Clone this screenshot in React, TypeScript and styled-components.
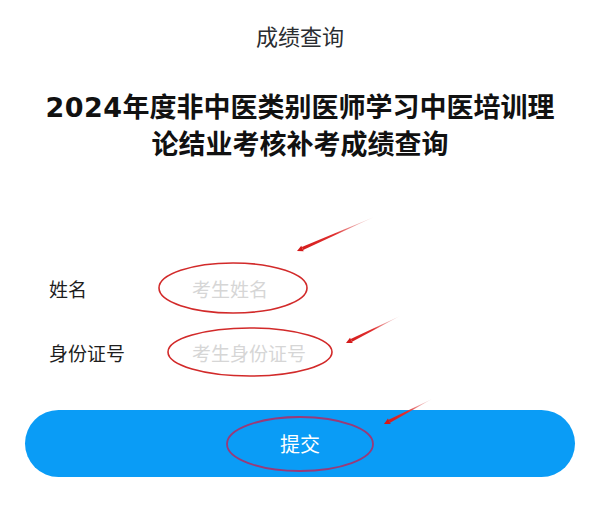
import styled, { createGlobalStyle } from "styled-components";

const GlobalStyle = createGlobalStyle`
  html, body {
    margin: 0;
    padding: 0;
    background: #ffffff;
  }
  body {
    font-family: "Noto Sans CJK SC", "Noto Sans", sans-serif;
  }
`;

const Page = styled.div`
  position: relative;
  width: 600px;
  height: 527px;
  overflow: hidden;
  background: #ffffff;
`;

const NavTitle = styled.div`
  height: 70px;
  line-height: 70px;
  text-align: center;
  font-size: 22px;
  color: #2a2d31;
`;

const Heading = styled.h1`
  margin: 17px 0 0;
  text-align: center;
  font-size: 27px;
  line-height: 37px;
  font-weight: 700;
  color: #111111;
`;

const Year = styled.span`
  font-family: "DejaVu Sans", "Noto Sans", sans-serif;
  letter-spacing: 0.5px;
  line-height: 1;
`;

const Form = styled.form`
  display: flex;
  flex-direction: column;
  margin-top: 95px;
`;

const Row = styled.div`
  display: flex;
  align-items: center;
  height: 64px;
  padding-left: 49px;
`;

const Label = styled.label`
  width: 143px;
  flex-shrink: 0;
  font-size: 19px;
  color: #1e1e1e;
`;

const Input = styled.input`
  border: none;
  outline: none;
  padding: 0;
  background: transparent;
  font-family: inherit;
  font-size: 19px;
  color: #333333;
  width: 260px;

  &::placeholder {
    color: #d6d6d6;
  }
`;

const SubmitButton = styled.button`
  display: flex;
  align-items: center;
  justify-content: center;
  margin: 26px 25px 0;
  height: 67px;
  border: none;
  border-radius: 34px;
  background: #0a9cf6;
  color: #ffffff;
  font-family: inherit;
  font-size: 20px;
`;

const Marks = styled.svg`
  position: absolute;
  left: 0;
  top: 0;
  pointer-events: none;
`;

type ArrowProps = { x1: number; y1: number; x2: number; y2: number; id: string };

function Arrow({ x1, y1, x2, y2, id }: ArrowProps) {
  const dx = x2 - x1;
  const dy = y2 - y1;
  const len = Math.hypot(dx, dy);
  const ux = dx / len;
  const uy = dy / len;
  const nx = -uy;
  const ny = ux;
  const w = 1.6;
  const hx = x2 - ux * 6;
  const hy = y2 - uy * 6;
  const body = [
    `${x1},${y1}`,
    `${hx + nx * w},${hy + ny * w}`,
    `${hx - nx * w},${hy - ny * w}`,
  ].join(" ");
  const head = [
    `${x2},${y2}`,
    `${hx + nx * 3},${hy + ny * 3}`,
    `${hx - nx * 3},${hy - ny * 3}`,
  ].join(" ");
  return (
    <g>
      <defs>
        <linearGradient id={id} gradientUnits="userSpaceOnUse" x1={x1} y1={y1} x2={x2} y2={y2}>
          <stop offset="0" stopColor="#e8c0c0" stopOpacity="0.4" />
          <stop offset="0.5" stopColor="#e03030" />
          <stop offset="1" stopColor="#d41a1a" />
        </linearGradient>
      </defs>
      <polygon points={body} fill={`url(#${id})`} />
      <polygon points={head} fill="#d41a1a" />
    </g>
  );
}

export default function App() {
  return (
    <>
      <GlobalStyle />
      <Page>
        <NavTitle>成绩查询</NavTitle>
        <Heading>
          <Year>2024</Year>年度非中医类别医师学习中医培训理
          <br />
          论结业考核补考成绩查询
        </Heading>
        <Form onSubmit={e => e.preventDefault()}>
          <Row>
            <Label>姓名</Label>
            <Input placeholder="考生姓名" />
          </Row>
          <Row>
            <Label>身份证号</Label>
            <Input placeholder="考生身份证号" />
          </Row>
          <SubmitButton type="submit">提交</SubmitButton>
        </Form>
        <Marks width="600" height="527" viewBox="0 0 600 527">
          <ellipse cx="233" cy="288" rx="74" ry="25" fill="none" stroke="#d22a2a" strokeWidth="1.6" />
          <ellipse cx="250" cy="352" rx="82" ry="24" fill="none" stroke="#d22a2a" strokeWidth="1.6" />
          <ellipse cx="300" cy="444" rx="73" ry="27" fill="none" stroke="#9a3a78" strokeWidth="1.8" />
          <Arrow id="a1" x1={374} y1={217} x2={297} y2={251} />
          <Arrow id="a2" x1={400} y1={316} x2={346} y2={343} />
          <Arrow id="a3" x1={432} y1={399} x2={384} y2={424} />
        </Marks>
      </Page>
    </>
  );
}
